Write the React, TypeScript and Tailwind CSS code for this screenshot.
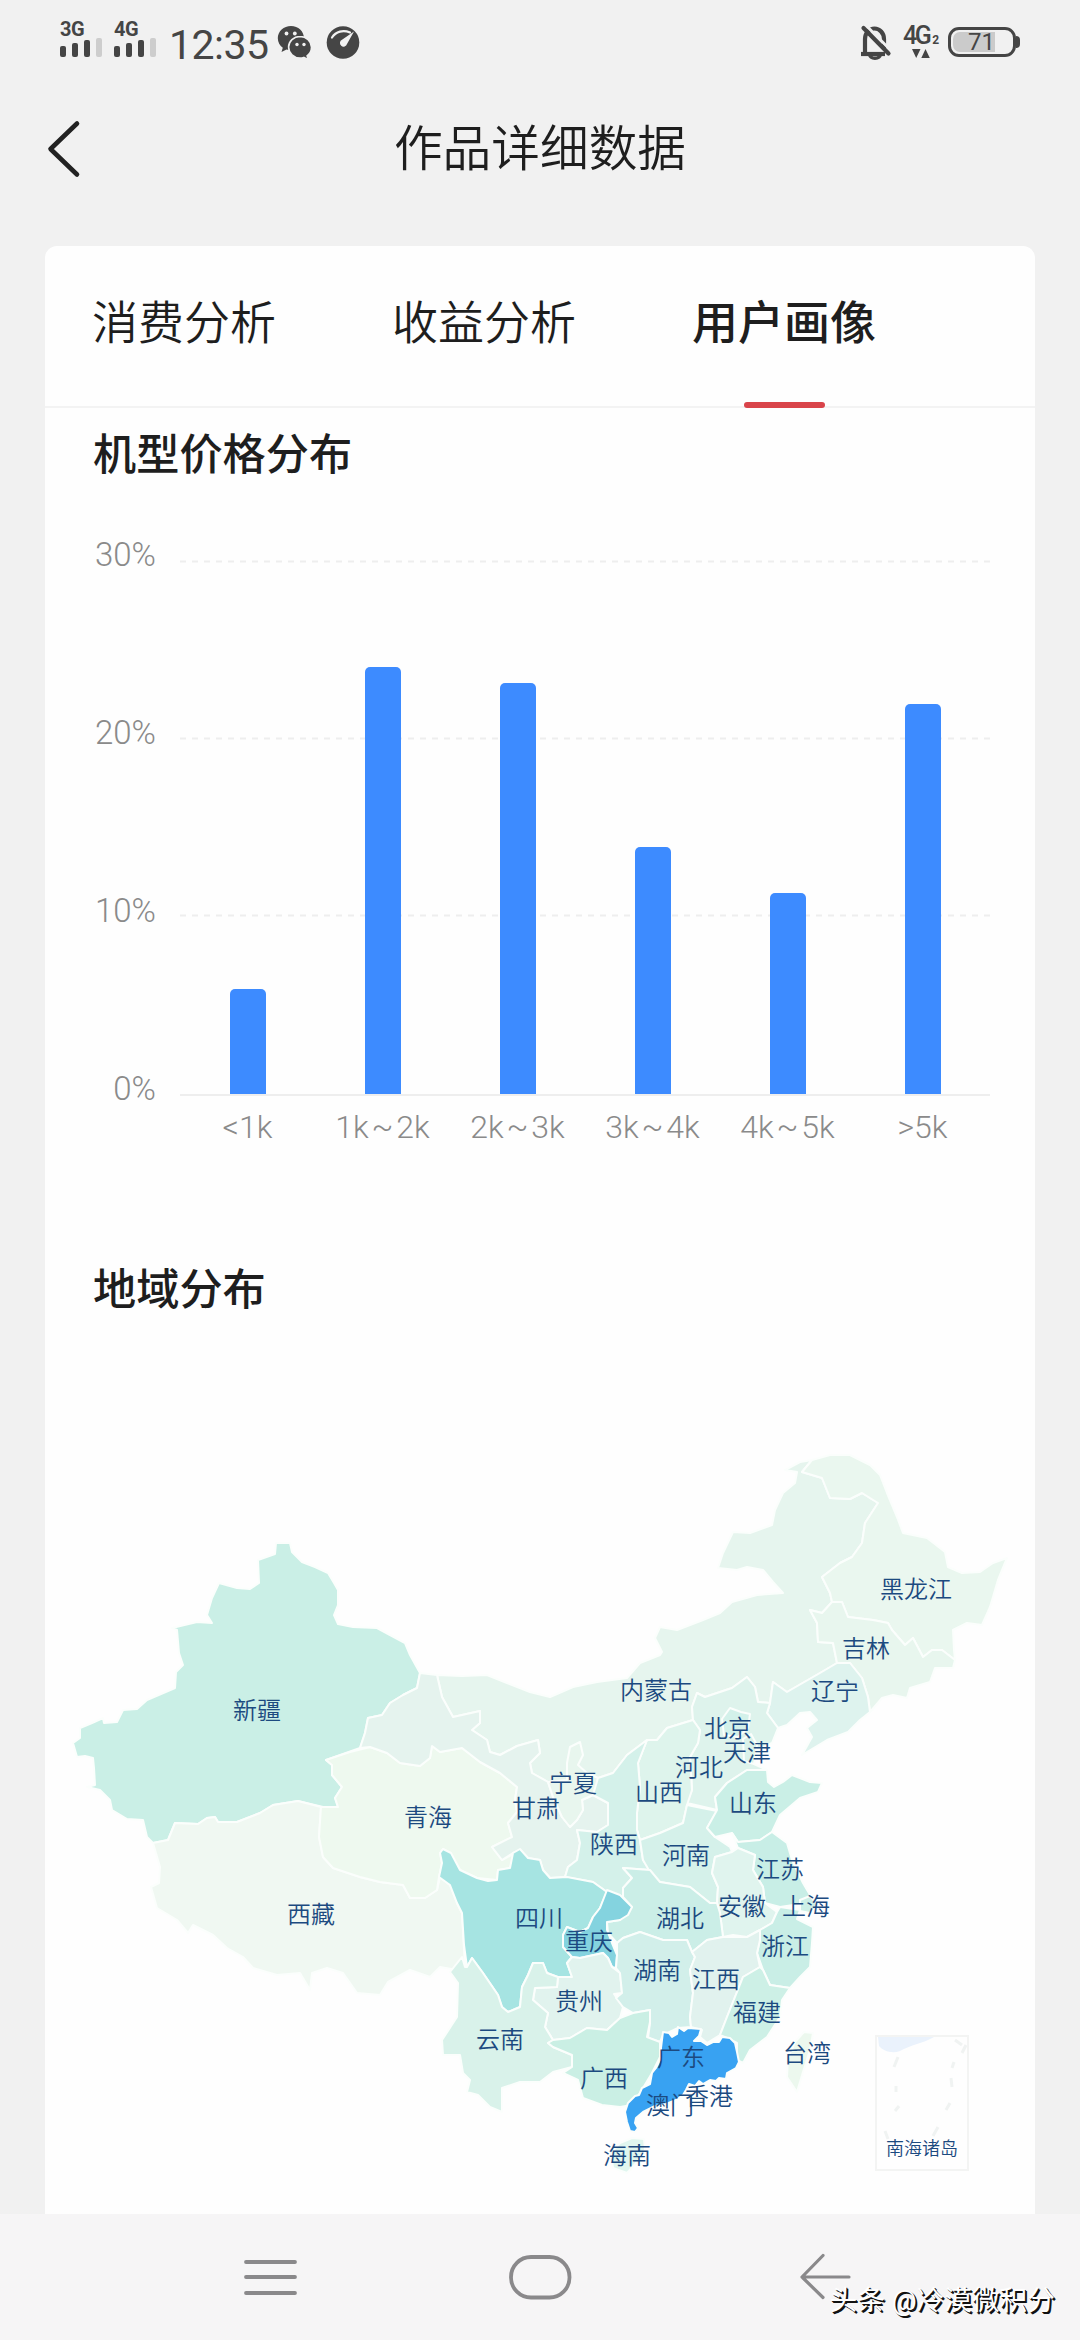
import clsx from 'clsx'

type Province = {
  name: string
  fill: string
  d: string
}

type MapLabel = [name: string, x: number, y: number]

const tabs = ['消费分析', '收益分析', '用户画像']

const priceBars = [
  { label: '<1k', height: 105 },
  { label: '1k ~ 2k', height: 427 },
  { label: '2k ~ 3k', height: 411 },
  { label: '3k ~ 4k', height: 247 },
  { label: '4k ~ 5k', height: 201 },
  { label: '>5k', height: 390 },
]

const provinces: Province[] = [
  {
    name: '内蒙古',
    fill: '#e6f5ee',
    d: 'M437 1675L462 1676L487 1675L507 1683L530 1692L550 1697L573 1687L597 1682L627 1678L640 1663L660 1655L662 1652L655 1638L660 1627L677 1630L703 1620L720 1613L732 1602L757 1595L783 1593L773 1582L763 1570L747 1567L737 1570L718 1568L723 1553L733 1532L750 1533L772 1525L775 1510L783 1493L795 1483L797 1472L785 1470L800 1462L812 1460L802 1472L822 1478L830 1498L850 1499L862 1493L878 1503L865 1523L862 1543L852 1557L840 1563L822 1577L830 1593L832 1602L822 1613L810 1610L817 1623L818 1642L833 1643L837 1663L820 1673L787 1692L773 1682L770 1703L758 1702L755 1687L747 1677L732 1688L705 1697L697 1693L692 1707L693 1720L667 1728L657 1740L647 1740L627 1755L613 1773L598 1778L587 1773L560 1785L548 1782L532 1773L530 1763L540 1753L538 1740L517 1746L500 1755L490 1752L487 1740L472 1730L480 1723L480 1711L453 1717L442 1697Z',
  },
  {
    name: '新疆',
    fill: '#caefe6',
    d: 'M276 1543L290 1543L292 1552L302 1562L315 1567L328 1573L334 1583L338 1590L338 1605L334 1615L338 1624L353 1627L377 1628L390 1635L405 1643L410 1655L420 1673L417 1688L403 1695L390 1703L382 1715L368 1718L365 1733L360 1748L343 1754L326 1760L332 1765L332 1775L342 1787L335 1798L338 1807L323 1807L298 1801L273 1805L260 1813L237 1822L218 1822L215 1817L207 1818L198 1824L175 1823L168 1840L153 1843L147 1837L143 1820L127 1819L112 1810L110 1800L100 1790L87 1787L95 1785L94 1768L93 1758L85 1756L77 1757L73 1743L80 1738L80 1728L92 1723L103 1718L104 1723L117 1722L123 1710L137 1709L147 1700L175 1688L176 1672L183 1665L179 1653L177 1630L172 1628L197 1622L212 1623L207 1615L212 1598L219 1583L237 1588L250 1589L259 1583L258 1560L275 1554Z',
  },
  {
    name: '西藏',
    fill: '#f0f8f2',
    d: 'M153 1843L168 1840L175 1823L198 1824L207 1818L215 1817L218 1822L237 1822L260 1813L273 1805L298 1801L321 1807L319 1837L323 1857L333 1868L360 1877L380 1882L403 1885L410 1898L425 1898L437 1890L440 1877L450 1885L457 1903L462 1913L465 1967L457 1970L440 1967L430 1977L410 1970L388 1982L380 1995L357 1993L343 1973L327 1968L312 1973L310 1990L300 1973L277 1975L253 1968L243 1957L227 1948L213 1935L193 1925L188 1933L177 1920L157 1908L151 1887L159 1883L160 1867Z',
  },
  {
    name: '青海',
    fill: '#eef9ef',
    d: 'M326 1760L350 1752L370 1747L387 1753L400 1763L420 1766L430 1758L432 1746L440 1752L462 1748L480 1762L500 1773L517 1787L515 1800L517 1812L508 1823L512 1837L492 1847L502 1860L515 1853L510 1868L498 1870L497 1880L477 1878L460 1870L450 1853L443 1849L440 1853L442 1863L439 1877L437 1890L425 1898L410 1898L403 1885L380 1882L360 1877L333 1868L323 1857L319 1837L321 1807L338 1807L335 1798L342 1787L332 1775L332 1765Z',
  },
  {
    name: '甘肃',
    fill: '#e5f3ee',
    d: 'M420 1673L437 1675L442 1697L453 1717L480 1711L480 1723L472 1730L487 1740L490 1752L500 1755L517 1746L538 1740L540 1753L530 1763L532 1773L548 1782L553 1797L562 1817L570 1827L577 1820L583 1810L582 1800L593 1795L608 1803L608 1825L597 1832L577 1830L580 1843L577 1860L568 1867L565 1877L550 1878L543 1870L540 1860L528 1858L520 1850L513 1853L502 1860L492 1847L512 1837L508 1823L517 1812L515 1800L517 1787L500 1773L480 1762L462 1748L440 1752L432 1746L430 1758L420 1766L400 1763L387 1753L370 1747L360 1748L365 1733L368 1718L382 1715L390 1703L403 1695L417 1688Z',
  },
  {
    name: '宁夏',
    fill: '#e8f6ee',
    d: 'M548 1782L567 1780L567 1763L570 1747L580 1742L583 1755L578 1765L587 1773L598 1778L597 1790L593 1795L582 1800L583 1810L577 1820L570 1827L562 1817L553 1797Z',
  },
  {
    name: '黑龙江',
    fill: '#eaf7ef',
    d: 'M812 1460L830 1455L850 1455L870 1465L880 1475L887 1493L897 1517L903 1533L927 1538L945 1552L948 1567L962 1573L980 1572L993 1563L1007 1558L998 1580L990 1607L982 1625L967 1623L953 1630L954 1650L955 1660L942 1650L932 1650L923 1657L913 1638L905 1645L892 1630L888 1623L873 1620L848 1617L842 1602L832 1602L830 1593L822 1577L840 1563L852 1557L862 1543L865 1523L878 1503L862 1493L850 1499L830 1498L822 1478L802 1472Z',
  },
  {
    name: '吉林',
    fill: '#e8f6ee',
    d: 'M832 1602L842 1602L848 1617L873 1620L888 1623L892 1630L905 1645L913 1638L923 1657L932 1650L942 1650L955 1660L953 1668L935 1668L930 1682L910 1688L907 1698L893 1695L882 1698L870 1712L868 1697L862 1678L850 1663L837 1663L833 1643L818 1642L817 1623L810 1610L822 1613Z',
  },
  {
    name: '辽宁',
    fill: '#def3ee',
    d: 'M837 1663L850 1663L862 1678L868 1697L870 1712L860 1720L848 1732L827 1740L802 1755L812 1737L807 1728L817 1720L810 1712L800 1713L787 1725L778 1728L767 1713L770 1703L773 1682L787 1692L820 1673Z',
  },
  {
    name: '河北',
    fill: '#def3ec',
    d: 'M693 1720L692 1707L697 1693L705 1697L732 1688L747 1677L755 1687L758 1702L770 1703L767 1713L778 1728L772 1743L757 1750L754 1764L767 1770L747 1770L727 1783L715 1797L717 1810L687 1803L692 1790L690 1757L698 1743L700 1730Z',
  },
  {
    name: '北京',
    fill: '#d3f1ea',
    d: 'M722 1719L730 1708L741 1712L750 1714L748 1728L738 1737L724 1735Z',
  },
  {
    name: '天津',
    fill: '#daf2ea',
    d: 'M743 1739L751 1734L757 1745L754 1764L744 1761Z',
  },
  {
    name: '山西',
    fill: '#def4ec',
    d: 'M647 1740L657 1740L667 1728L693 1720L700 1730L698 1743L690 1757L692 1790L687 1805L683 1823L660 1833L640 1840L637 1830L637 1813L640 1787L638 1763Z',
  },
  {
    name: '陕西',
    fill: '#d4f1ea',
    d: 'M647 1740L638 1763L640 1787L637 1813L637 1830L640 1840L643 1860L650 1870L623 1868L632 1878L623 1888L623 1897L607 1892L593 1882L565 1877L568 1867L577 1860L580 1843L577 1830L597 1832L608 1825L608 1803L593 1795L598 1778L613 1773L627 1755Z',
  },
  {
    name: '河南',
    fill: '#d5f1ea',
    d: 'M640 1840L660 1833L683 1823L687 1805L717 1811L707 1828L715 1837L730 1847L732 1852L715 1857L712 1873L718 1887L717 1903L710 1903L690 1887L660 1882L650 1872L643 1860Z',
  },
  {
    name: '山东',
    fill: '#caefe6',
    d: 'M715 1797L727 1783L747 1770L767 1770L768 1782L774 1787L783 1782L792 1775L810 1782L822 1783L818 1792L800 1798L780 1815L772 1832L760 1840L738 1842L732 1833L715 1837L707 1828L717 1810Z',
  },
  {
    name: '江苏',
    fill: '#c8eee6',
    d: 'M732 1833L738 1842L760 1840L772 1832L787 1843L792 1860L803 1883L813 1900L800 1904L780 1907L765 1903L763 1887L753 1870L755 1855L738 1848Z',
  },
  {
    name: '上海',
    fill: '#cdf0e7',
    d: 'M800 1900L810 1896L818 1906L810 1913L800 1911Z',
  },
  {
    name: '安徽',
    fill: '#e0f4ee',
    d: 'M732 1852L738 1848L755 1855L753 1870L763 1887L765 1903L777 1912L772 1923L760 1930L747 1937L733 1935L723 1937L720 1913L717 1903L718 1887L712 1873L715 1857Z',
  },
  {
    name: '浙江',
    fill: '#c9eee6',
    d: 'M777 1912L780 1907L800 1910L797 1919L813 1927L812 1943L810 1967L800 1977L790 1988L770 1985L763 1970L757 1953L760 1940L760 1930L772 1923Z',
  },
  {
    name: '湖北',
    fill: '#cbeee7',
    d: 'M650 1870L660 1882L690 1887L710 1903L717 1903L720 1913L723 1937L707 1940L692 1952L687 1940L663 1940L640 1932L623 1938L617 1943L608 1933L607 1922L620 1920L632 1907L623 1897L623 1888L632 1878L623 1868Z',
  },
  {
    name: '四川',
    fill: '#a6e4e2',
    d: 'M443 1849L451 1853L460 1870L477 1878L488 1881L497 1880L498 1870L510 1868L513 1853L520 1849L528 1858L540 1860L543 1870L550 1878L567 1877L593 1882L607 1892L600 1908L593 1917L588 1928L580 1932L567 1927L563 1935L563 1947L572 1957L567 1963L572 1977L560 1978L547 1973L543 1963L533 1963L528 1975L522 1987L520 2007L508 2012L502 2007L498 1995L483 1973L472 1958L467 1967L464 1945L462 1913L457 1903L450 1885L439 1877L442 1863L440 1853Z',
  },
  {
    name: '重庆',
    fill: '#84d3df',
    d: 'M607 1890L620 1895L632 1907L628 1915L620 1920L607 1922L607 1930L612 1943L617 1955L616 1968L612 1967L608 1958L603 1953L580 1958L572 1957L563 1947L563 1935L567 1927L580 1932L588 1928L593 1917L600 1908Z',
  },
  {
    name: '贵州',
    fill: '#e1f3ee',
    d: 'M572 1957L580 1958L603 1953L608 1958L612 1967L620 1973L622 1993L614 1994L623 2007L620 2018L607 2030L587 2028L570 2038L553 2040L545 2027L548 2013L533 2000L535 1988L557 1987L558 1977L572 1977L567 1963Z',
  },
  {
    name: '云南',
    fill: '#d9f2ea',
    d: 'M465 1967L467 1967L472 1958L483 1973L498 1995L502 2007L508 2012L520 2007L522 1987L528 1975L533 1963L543 1963L547 1973L558 1977L557 1987L535 1988L533 2000L548 2013L545 2027L553 2040L548 2043L553 2047L572 2055L572 2067L553 2072L540 2082L520 2082L502 2088L502 2112L490 2107L478 2095L467 2092L470 2080L463 2073L460 2055L443 2055L442 2040L457 2017L458 1983L450 1972L462 1957Z',
  },
  {
    name: '湖南',
    fill: '#d2efea',
    d: 'M617 1943L623 1938L640 1932L663 1940L687 1940L692 1952L695 1957L690 1970L693 1993L690 2017L691 2027L678 2028L663 2035L660 2042L648 2038L650 2023L650 2010L633 2013L623 2007L616 1998L622 1993L620 1973L616 1968L617 1955Z',
  },
  {
    name: '江西',
    fill: '#e1f2ee',
    d: 'M692 1952L707 1940L723 1937L747 1937L760 1930L760 1940L757 1953L760 1967L743 1977L735 1997L727 2017L720 2035L707 2043L700 2037L702 2030L691 2027L690 2017L693 1993L690 1970L695 1957Z',
  },
  {
    name: '福建',
    fill: '#cdf0e6',
    d: 'M760 1967L763 1970L770 1985L790 1988L782 2000L780 2017L767 2037L750 2050L743 2063L737 2060L737 2043L727 2038L720 2035L727 2017L735 1997L743 1977Z',
  },
  {
    name: '广西',
    fill: '#caefe4',
    d: 'M553 2040L570 2038L587 2028L607 2030L620 2018L633 2013L650 2010L650 2022L647 2037L660 2042L660 2057L652 2073L640 2093L632 2105L620 2107L602 2105L583 2098L578 2080L563 2073L572 2067L572 2055L553 2047L548 2043Z',
  },
  {
    name: '广东',
    fill: '#38a2f2',
    d: 'M663 2032L669 2033L672 2037L677 2034L678 2027L684 2031L688 2028L701 2029L699 2036L694 2041L701 2041L707 2045L713 2042L719 2042L722 2037L730 2038L735 2043L737 2052L739 2062L736 2068L727 2073L726 2079L719 2078L716 2081L710 2080L703 2084L699 2081L695 2086L689 2084L686 2090L683 2095L676 2100L666 2104L655 2106L643 2112L636 2118L635 2123L638 2128L635 2132L630 2131L627 2122L625 2112L628 2103L635 2096L639 2095L642 2088L650 2084L652 2073L656 2068L661 2058L661 2048Z',
  },
  {
    name: '海南',
    fill: '#e0f6ef',
    d: 'M620 2143L632 2138L644 2139L645 2150L637 2162L627 2173L613 2168L611 2153Z',
  },
  {
    name: '台湾',
    fill: '#ecf8ee',
    d: 'M804 2032L813 2033L810 2050L803 2072L797 2092L787 2077L788 2058L795 2042Z',
  },
]

const mapLabels: MapLabel[] = [
  ['新疆', 257, 1710],
  ['西藏', 311, 1914],
  ['青海', 428, 1817],
  ['内蒙古', 656, 1690],
  ['宁夏', 573, 1783],
  ['甘肃', 536, 1808],
  ['陕西', 614, 1844],
  ['山西', 659, 1792],
  ['河南', 686, 1855],
  ['河北', 699, 1767],
  ['天津', 747, 1752],
  ['北京', 728, 1728],
  ['辽宁', 835, 1691],
  ['吉林', 866, 1648],
  ['黑龙江', 916, 1589],
  ['四川', 539, 1918],
  ['重庆', 589, 1941],
  ['湖北', 680, 1918],
  ['湖南', 657, 1970],
  ['贵州', 579, 2001],
  ['云南', 500, 2039],
  ['广东', 681, 2057],
  ['广西', 604, 2078],
  ['澳门', 670, 2105],
  ['香港', 709, 2096],
  ['海南', 627, 2155],
  ['山东', 753, 1803],
  ['江苏', 780, 1869],
  ['安徽', 742, 1906],
  ['上海', 806, 1906],
  ['浙江', 785, 1946],
  ['江西', 716, 1979],
  ['福建', 757, 2012],
  ['台湾', 807, 2053],
]

function Signal({ type }: { type: string }) {
  return (
    <div className="flex w-[42px] flex-col">
      <span className="h-[16px] text-[20px] leading-[17px] font-bold tracking-[-0.5px]">
        {type}
      </span>
      <div className="flex h-[20px] items-end gap-[6px]">
        <i className="h-[11px] w-[6px] rounded-[2px] bg-[#454545]" />
        <i className="h-[14px] w-[6px] rounded-[2px] bg-[#454545]" />
        <i className="h-[17px] w-[6px] rounded-[2px] bg-[#454545]" />
        <i className="h-[19px] w-[6px] rounded-[2px] bg-[#cdcdcd]" />
      </div>
    </div>
  )
}

function StatusBar() {
  return (
    <div className="flex h-[84px] items-start pr-[60px] pl-[60px] text-[#454545]">
      <div className="mt-[21px] flex gap-[12px]">
        <Signal type="3G" />
        <Signal type="4G" />
      </div>
      <span className="mt-[21px] ml-[13px] w-[104px] text-[41px] leading-[48px] tracking-[-0.500px] whitespace-nowrap">
        12:35
      </span>
      <svg className="mt-[25px] ml-[4px] h-[36px] w-[34px]" viewBox="276 25 34 36">
        <path
          fill="#454545"
          d="M290 26c-7.300 0-13.200 5.400-13.200 12.200 0 4 2 7.300 5 9.500l-1.300 4.300 5-2.600c1.500.5 3 .7 4.500.7 7.300 0 13-5.300 13-12S297.300 26 290 26z"
        />
        <path
          fill="#454545"
          stroke="#f1f1f1"
          strokeWidth="1.600"
          d="M299 36.500c-6.300 0-11.400 4.800-11.400 10.600S292.700 58 299 58c1.300 0 2.600-.2 3.800-.6l4.500 2.300-1.200-3.900c2.700-2 4.400-5.100 4.400-8.600 0-5.900-5.200-10.700-11.500-10.700z"
        />
        <circle cx="285.500" cy="33.500" r="1.900" fill="#f1f1f1" />
        <circle cx="293.800" cy="33.500" r="1.900" fill="#f1f1f1" />
        <circle cx="296" cy="44.500" r="1.700" fill="#f1f1f1" />
        <circle cx="303" cy="44.500" r="1.700" fill="#f1f1f1" />
      </svg>
      <svg className="mt-[25px] ml-[15px] h-[36px] w-[34px]" viewBox="0 0 34 36">
        <circle cx="17" cy="17.500" r="16.300" fill="#454545" />
        <path
          d="M6 12.500C10 6.500 17 4.500 24 7.500"
          fill="none"
          stroke="#f1f1f1"
          strokeWidth="2.200"
          strokeLinecap="round"
        />
        <path d="M28 6.500L21 19a3.600 3.600 0 1 1-5-4.200z" fill="#f1f1f1" />
      </svg>

      <svg className="mt-[24px] ml-auto h-[36px] w-[32px]" viewBox="0 0 32 36">
        <g fill="none" stroke="#454545" strokeWidth="4.200">
          <path d="M5 30V15c0-6 4.500-10.500 9.500-10.500S24 9 24 15v9" />
          <path d="M1 30h24" />
          <path d="M9.500 30.500c1 5 10 5 11 0" strokeWidth="3.400" />
          <path d="M5 0.500l26 26" stroke="#f1f1f1" strokeWidth="3" />
          <path d="M3.500 4l25 25.500" strokeLinecap="round" />
        </g>
      </svg>
      <div className="mt-[24px] ml-[11px] flex w-[35px] flex-col">
        <div className="flex h-[22px] items-baseline">
          <span className="text-[25px] leading-[23px] font-medium tracking-[-2.500px]">4G</span>
          <span className="ml-[3px] text-[12px] leading-[12px] font-bold">2</span>
        </div>
        <svg className="mt-[3px] ml-[9px] h-[9px] w-[18px]" viewBox="0 0 18 9" fill="#454545">
          <path d="M0 0h8.500L4.200 9zM9.300 9h8.500L13.500 0z" />
        </svg>
      </div>
      <div className="mt-[27px] ml-[10px] flex items-center">
        <div className="flex h-[30px] w-[68px] rounded-[11px] border-[3px] border-[#454545] p-[2px]">
          <div className="flex w-[42px] items-center justify-end rounded-l-[7px] bg-[#cbcbcb] text-[24px]">
            71
          </div>
        </div>
        <div className="h-[12px] w-[4px] rounded-r-[4px] bg-[#454545]" />
      </div>
    </div>
  )
}

function TitleBar() {
  return (
    <header className="grid h-[162px] grid-cols-[200px_1fr_200px] text-[#1e1e1e]">
      <svg className="mt-[35px] ml-[46px] h-[60px] w-[36px]" viewBox="0 0 36 60">
        <path
          d="M31 4.500L4.500 30L31 55.500"
          fill="none"
          stroke="#222"
          strokeWidth="4.600"
          strokeLinecap="round"
          strokeLinejoin="round"
        />
      </svg>
      <h1 className="mt-[30px] text-center text-[48.700px] leading-[72px] font-[350]">
        作品详细数据
      </h1>
    </header>
  )
}

function Tabs() {
  return (
    <div className="flex h-[162px] gap-[116px] border-b-2 border-[#f3f3f3] pl-[47px]">
      {tabs.map((tab, i) => (
        <div key={tab} className="flex w-[184px] flex-col items-center pt-[43px] text-[#1e1e1e]">
          <span
            className={clsx(
              'text-[46px] leading-[68px] whitespace-nowrap',
              i === 2 ? 'font-medium' : 'font-[350]'
            )}
          >
            {tab}
          </span>
          {i === 2 && <span className="mt-[45px] h-[6px] w-[81px] shrink-0 rounded-[3px] bg-[#d9444a]" />}
        </div>
      ))}
    </div>
  )
}

function PriceChart() {
  return (
    <section className="h-[832px]">
      <h2 className="pt-[16px] pl-[48px] text-[43.200px] leading-[64px] font-medium text-[#1e1e1e]">
        机型价格分布
      </h2>
      <div className="mt-[50px] flex h-[564px] text-[32px] font-light text-[#8a8a8a]">
        <div className="flex w-[111px] flex-col text-right text-[33px] leading-[34px]">
          {['30%', '20%', '10%', '0%'].map((tick) => (
            <span key={tick} className="h-[178px] shrink-0">
              {tick}
            </span>
          ))}
        </div>
        <div className="ml-[24px] w-[810px] pt-[22px]">
          <div className="relative h-[534px]">
            <svg className="absolute inset-0 h-[536px] w-[810px]" viewBox="0 0 810 536">
              <g stroke="#eeeeee" strokeWidth="2" strokeDasharray="6 6">
                <path d="M0 1.500H810M0 178.500H810M0 355.500H810" />
              </g>
              <path d="M0 535H810" stroke="#eeeeee" strokeWidth="2" />
            </svg>
            <div className="relative flex h-full items-end justify-around">
              {priceBars.map((bar) => (
                <div
                  key={bar.label}
                  className="w-[36px] rounded-t-[5px] bg-[#3d8bff]"
                  style={{ height: bar.height }}
                />
              ))}
            </div>
          </div>
          <div className="grid grid-cols-6 pt-[8px] text-center leading-[50px] [word-spacing:-5px]">
            {priceBars.map((bar) => (
              <span key={bar.label} className="whitespace-nowrap">
                {bar.label}
              </span>
            ))}
          </div>
        </div>
      </div>
    </section>
  )
}

function RegionMap() {
  return (
    <section className="flex flex-1 flex-col">
      <h2 className="pt-[19px] pl-[48px] text-[43.200px] leading-[64px] font-medium text-[#1e1e1e]">
        地域分布
      </h2>
      <svg className="mt-auto h-[814px] w-[990px]" viewBox="45 1400 990 814">
        <g stroke="#fbfefc" strokeWidth="2" strokeLinejoin="round">
          {provinces.map((p) => (
            <path key={p.name} d={p.d} fill={p.fill} />
          ))}
        </g>
        <rect x="876" y="2036" width="92" height="134" fill="#fefefe" stroke="#f3f4f3" strokeWidth="2" />
        <path d="M878 2037h56c-10 6-24 8-34 14-8 3-17 0-21-5z" fill="#eaf2fc" />
        <path
          d="M898 2057l-4 10M896 2086v6M899 2106l-4 5M885 2131l3 8M954 2062l-2 6M951 2078l1 9M950 2103l-4 7M938 2127l-5 9M955 2040l7 5M966 2045l-4 8"
          stroke="#f0f3f2"
          strokeWidth="3"
        />
        <g fill="#1c4a80" fontSize="24" fontWeight="350" textAnchor="middle">
          {mapLabels.map(([name, x, y]) => (
            <text key={name} x={x} y={y + 9}>
              {name}
            </text>
          ))}
          <text x="922" y="2155" fontSize="18">
            南海诸岛
          </text>
        </g>
      </svg>
    </section>
  )
}

function NavBar() {
  return (
    <nav className="relative grid h-[126px] grid-cols-3 bg-[#f6f5f6]">
      <svg className="col-span-3 h-[126px] w-[1080px]" viewBox="0 2214 1080 126">
        <g fill="none" stroke="#8a898b" strokeWidth="3.800" strokeLinecap="round" strokeLinejoin="round">
          <path d="M246 2262H295M246 2277H295M246 2293H295" />
          <rect x="511" y="2257" width="58.500" height="40.500" rx="20" />
          <path d="M849 2277H802M823 2255.500L802 2277L823 2297.500" strokeWidth="3.200" />
        </g>
      </svg>
      <span className="absolute top-[67px] right-[25px] text-[27.700px] leading-[40px] whitespace-nowrap text-white [text-shadow:1px_1px_0_#111,2px_2px_0_#111]">
        头条 @冷漠微积分
      </span>
    </nav>
  )
}

export default function App() {
  return (
    <div className="flex h-[2340px] w-[1080px] flex-col overflow-hidden bg-[#f1f1f1] font-['Roboto','Noto_Sans_CJK_SC',sans-serif]">
      <StatusBar />
      <TitleBar />
      <main className="mx-[45px] flex w-[990px] flex-1 flex-col rounded-t-[12px] bg-[#fefefe]">
        <Tabs />
        <PriceChart />
        <RegionMap />
      </main>
      <NavBar />
    </div>
  )
}
